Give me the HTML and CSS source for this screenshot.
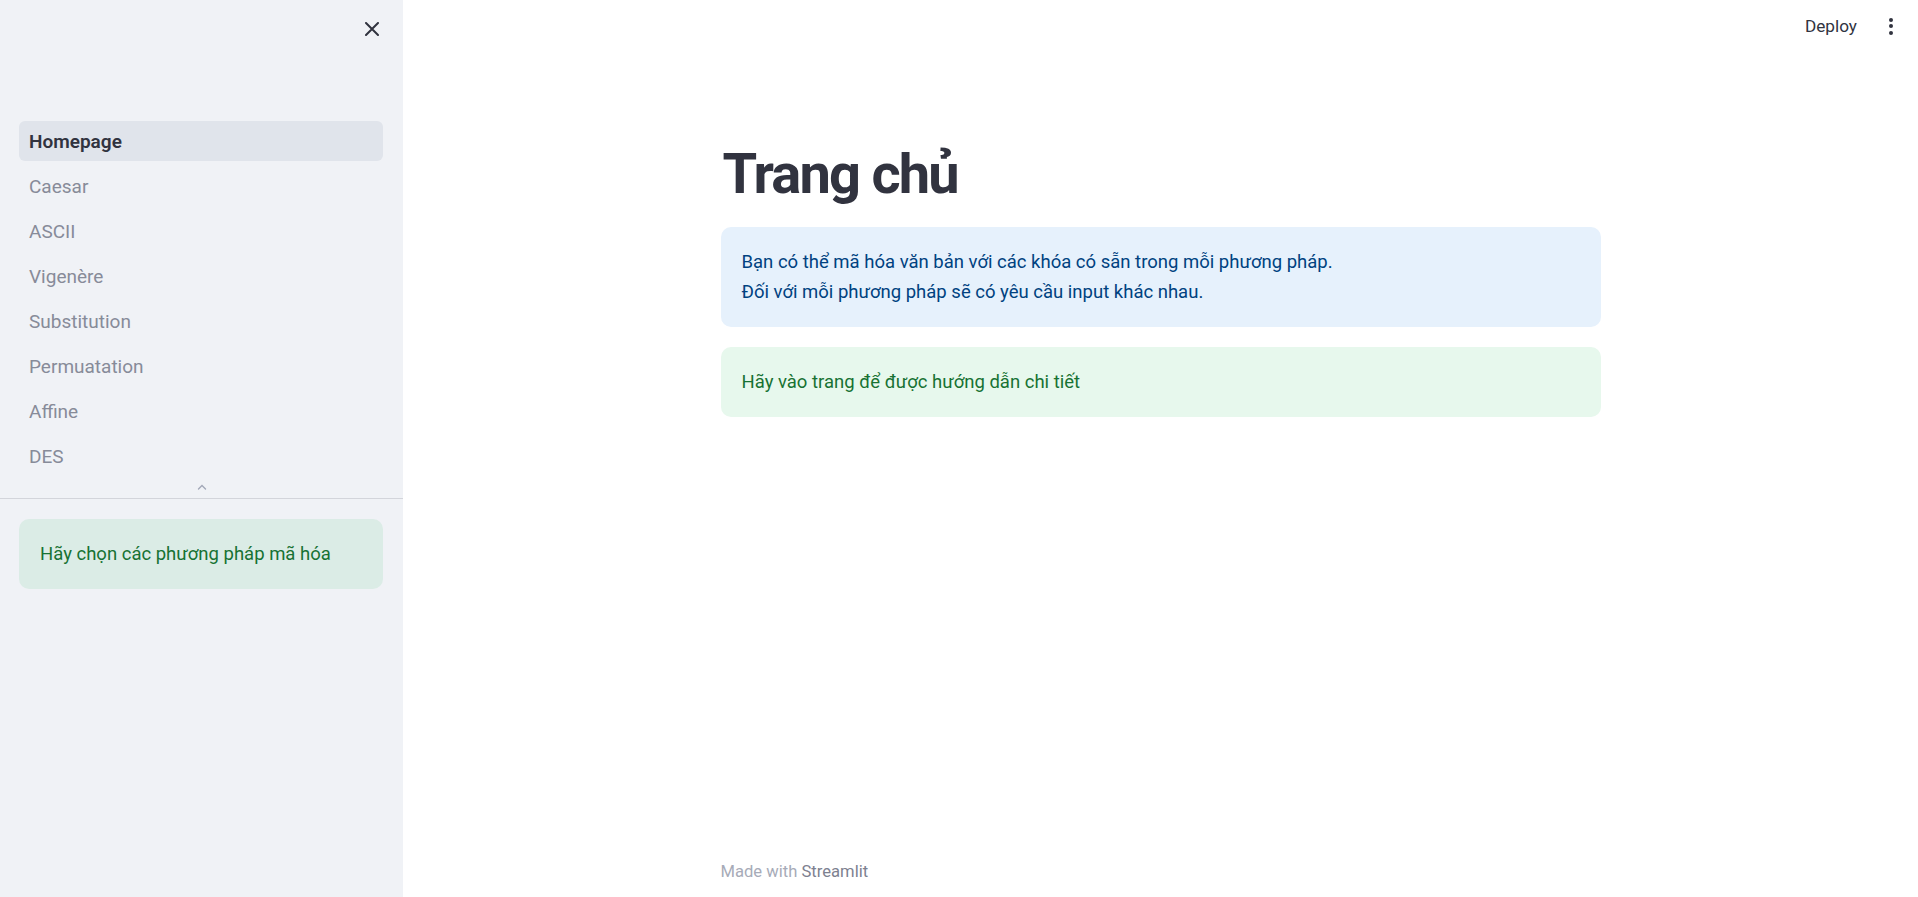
FILE: index.html
```html
<!DOCTYPE html>
<html lang="vi">
<head>
<meta charset="utf-8">
<title>Homepage</title>
<link rel="stylesheet" href="styles.css">
</head>
<body>
<div class="app">
  <aside class="sidebar">
    <div class="sb-header">
      <button class="close-btn" aria-label="Close sidebar">
        <svg width="14" height="14" viewBox="0 0 14 14"><path d="M1 1 L13 13 M13 1 L1 13" stroke="#31333f" stroke-width="2" stroke-linecap="round" fill="none"/></svg>
      </button>
    </div>
    <nav class="nav">
      <a class="nav-item active">Homepage</a>
      <a class="nav-item">Caesar</a>
      <a class="nav-item">ASCII</a>
      <a class="nav-item">Vigenère</a>
      <a class="nav-item">Substitution</a>
      <a class="nav-item">Permuatation</a>
      <a class="nav-item">Affine</a>
      <a class="nav-item">DES</a>
    </nav>
    <div class="nav-toggle">
      <svg width="10" height="6" viewBox="0 0 10 6"><path d="M1.5 5 L5 1.5 L8.5 5" stroke="#a3a8b8" stroke-width="1.4" fill="none" stroke-linecap="round"/></svg>
    </div>
    <div class="divider"></div>
    <div class="sb-content">
      <div class="alert alert-success sb-alert">Hãy chọn các phương pháp mã hóa</div>
    </div>
  </aside>
  <main class="main">
    <header class="topbar">
      <span class="deploy">Deploy</span>
      <span class="kebab"><i></i><i></i><i></i></span>
    </header>
    <section class="block">
      <h1 class="title">Trang chủ</h1>
      <div class="alert alert-info">Bạn có thể mã hóa văn bản với các khóa có sẵn trong mỗi phương pháp.<br>Đối với mỗi phương pháp sẽ có yêu cầu input khác nhau.</div>
      <div class="alert alert-success">Hãy vào trang để được hướng dẫn chi tiết</div>
    </section>
    <footer class="footer">
      <span class="made">Made with</span> <span class="brand">Streamlit</span>
    </footer>
  </main>
</div>
</body>
</html>
```
FILE: styles.css
```css
html, body {
  margin: 0;
  padding: 0;
  height: 100%;
}
body {
  font-family: Roboto, "Noto Sans", sans-serif;
  color: #31333f;
  background: #ffffff;
}
.app {
  display: flex;
  height: 100vh;
  overflow: hidden;
}
.sidebar {
  width: 403px;
  flex: 0 0 403px;
  background: #f0f2f6;
  display: flex;
  flex-direction: column;
}
.sb-header {
  height: 58px;
  display: flex;
  justify-content: flex-end;
  align-items: center;
  padding-right: 24px;
  box-sizing: border-box;
}
.close-btn {
  background: none;
  border: 0;
  padding: 0;
  width: 14px;
  height: 14px;
  display: flex;
}
.nav {
  display: flex;
  flex-direction: column;
  gap: 5px;
  padding: 63px 20px 0 19px;
}
.nav-item {
  height: 40px;
  display: flex;
  align-items: center;
  padding-left: 10px;
  border-radius: 6px;
  font-size: 19px;
  color: #878b99;
}
.nav-item.active {
  background: #e0e4eb;
  color: #31333f;
  font-weight: 600;
}
.nav-toggle {
  display: flex;
  justify-content: center;
  height: 22px;
  align-items: center;
}
.divider {
  height: 1px;
  background: #d3d5db;
}
.sb-content {
  padding: 20px 20px 0 19px;
}
.alert {
  border-radius: 10px;
  padding: 20px 21px;
  font-size: 18.5px;
  line-height: 30px;
}
.alert-info {
  background: #e6f1fc;
  color: #004280;
}
.alert-success {
  background: #e7f8ed;
  color: #177233;
}
.sb-alert {
  background: #dbece6;
}
.main {
  flex: 1;
  display: flex;
  flex-direction: column;
  align-items: center;
}
.topbar {
  align-self: stretch;
  height: 52px;
  display: flex;
  justify-content: flex-end;
  align-items: center;
  gap: 32px;
  padding-right: 25px;
}
.deploy {
  font-size: 17.2px;
  color: #31333f;
}
.kebab {
  display: flex;
  flex-direction: column;
  gap: 2.5px;
}
.kebab i {
  width: 4px;
  height: 4px;
  border-radius: 50%;
  background: #31333f;
}
.block {
  width: 880px;
  padding-top: 89px;
  display: flex;
  flex-direction: column;
  gap: 20px;
}
.title {
  margin: 0 0 -1px 2px;
  font-size: 56px;
  line-height: 67px;
  font-weight: 700;
  letter-spacing: -1.8px;
  color: #31333f;
}
.footer {
  margin-top: auto;
  width: 880px;
  height: 35px;
  font-size: 16.6px;
  line-height: 20px;
  box-sizing: border-box;
}
.made {
  color: #a7abb8;
}
.brand {
  color: #7d8190;
}
```
